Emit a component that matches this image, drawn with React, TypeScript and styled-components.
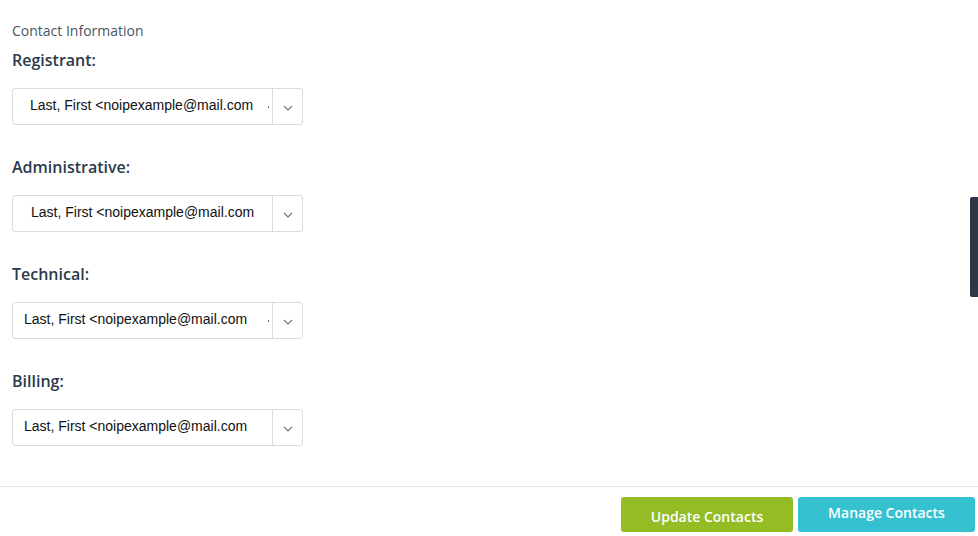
import React from 'react';
import styled, {createGlobalStyle} from 'styled-components';

const GlobalStyle = createGlobalStyle`
  html, body {
    margin: 0;
    padding: 0;
    background: #fff;
  }
  body {
    font-family: "Open Sans", "Liberation Sans", sans-serif;
  }
`;

const contacts = [
  {label: 'Registrant:', indent: 18, dot: true},
  {label: 'Administrative:', indent: 19, dot: false},
  {label: 'Technical:', indent: 12, dot: true},
  {label: 'Billing:', indent: 12, dot: false},
];

const Chevron: React.FC = () => (
  <svg width="10" height="6" viewBox="0 0 10 6" fill="none">
    <path d="M1 1l4 4 4-4" stroke="#6b7280" strokeWidth="1.1" />
  </svg>
);

const App: React.FC = () => (
  <Page>
    <GlobalStyle />
    <Content>
      <Heading>Contact Information</Heading>
      {contacts.map(c => (
        <Group key={c.label}>
          <Label>{c.label}</Label>
          <Select>
            <Value $indent={c.indent}>
              Last, First &lt;noipexample@mail.com
              {c.dot && <Dot />}
            </Value>
            <Toggle>
              <Chevron />
            </Toggle>
          </Select>
        </Group>
      ))}
    </Content>
    <Footer>
      <Button $color="#93bc25" $offset={2}>
        Update Contacts
      </Button>
      <Button $color="#35c1cf" $offset={-2}>
        Manage Contacts
      </Button>
    </Footer>
    <SideTab />
  </Page>
);

const Page = styled.div`
  position: relative;
  width: 978px;
  height: 536px;
  overflow: hidden;
`;

const Content = styled.div`
  padding: 21px 12px 0;
  height: 465px;
  box-sizing: border-box;
`;

const Heading = styled.div`
  font-size: 14px;
  color: #4b5563;
  line-height: 20px;
`;

const Group = styled.div`
  display: flex;
  flex-direction: column;
  margin-top: 8px;
  & + & {
    margin-top: 31px;
  }
`;

const Label = styled.div`
  font-size: 16px;
  font-weight: 600;
  color: #2c3a4b;
  line-height: 22px;
  margin-bottom: 17px;
`;

const Select = styled.div`
  display: flex;
  width: 291px;
  height: 37px;
  box-sizing: border-box;
  border: 1px solid #d9dce0;
  border-radius: 3px;
  background: #fff;
`;

const Value = styled.div<{$indent: number}>`
  flex: 1;
  display: flex;
  align-items: center;
  padding-left: ${p => p.$indent - 1}px;
  padding-bottom: 3px;
  font-family: "Liberation Sans", Arial, sans-serif;
  font-size: 14px;
  color: #111;
  white-space: nowrap;
  overflow: hidden;
  position: relative;
`;

const Dot = styled.span`
  position: absolute;
  right: 3px;
  top: 17px;
  width: 1.5px;
  height: 1.5px;
  background: #555;
  border-radius: 50%;
`;

const Toggle = styled.div`
  width: 30px;
  border-left: 1px solid #d9dce0;
  display: flex;
  align-items: center;
  justify-content: center;
  padding-top: 2px;
  box-sizing: border-box;
`;

const Footer = styled.div`
  border-top: 1px solid #e3e5e8;
  display: flex;
  justify-content: flex-end;
  gap: 5px;
  padding: 10px 3px 0 0;
  margin-top: 21px;
`;

const Button = styled.button<{$color: string; $offset: number}>`
  width: ${p => (p.$offset > 0 ? 172 : 177)}px;
  height: 35px;
  border: none;
  border-radius: 3px;
  background: ${p => p.$color};
  color: #fff;
  font-family: "Open Sans", sans-serif;
  font-weight: 600;
  font-size: 14px;
  padding: ${p => (p.$offset > 0 ? '4px 0 0' : '0 0 4px')};
`;

const SideTab = styled.div`
  position: absolute;
  right: 0;
  top: 197px;
  width: 8px;
  height: 100px;
  background: #2b3846;
  border-radius: 2px 0 0 2px;
`;

export default App;
